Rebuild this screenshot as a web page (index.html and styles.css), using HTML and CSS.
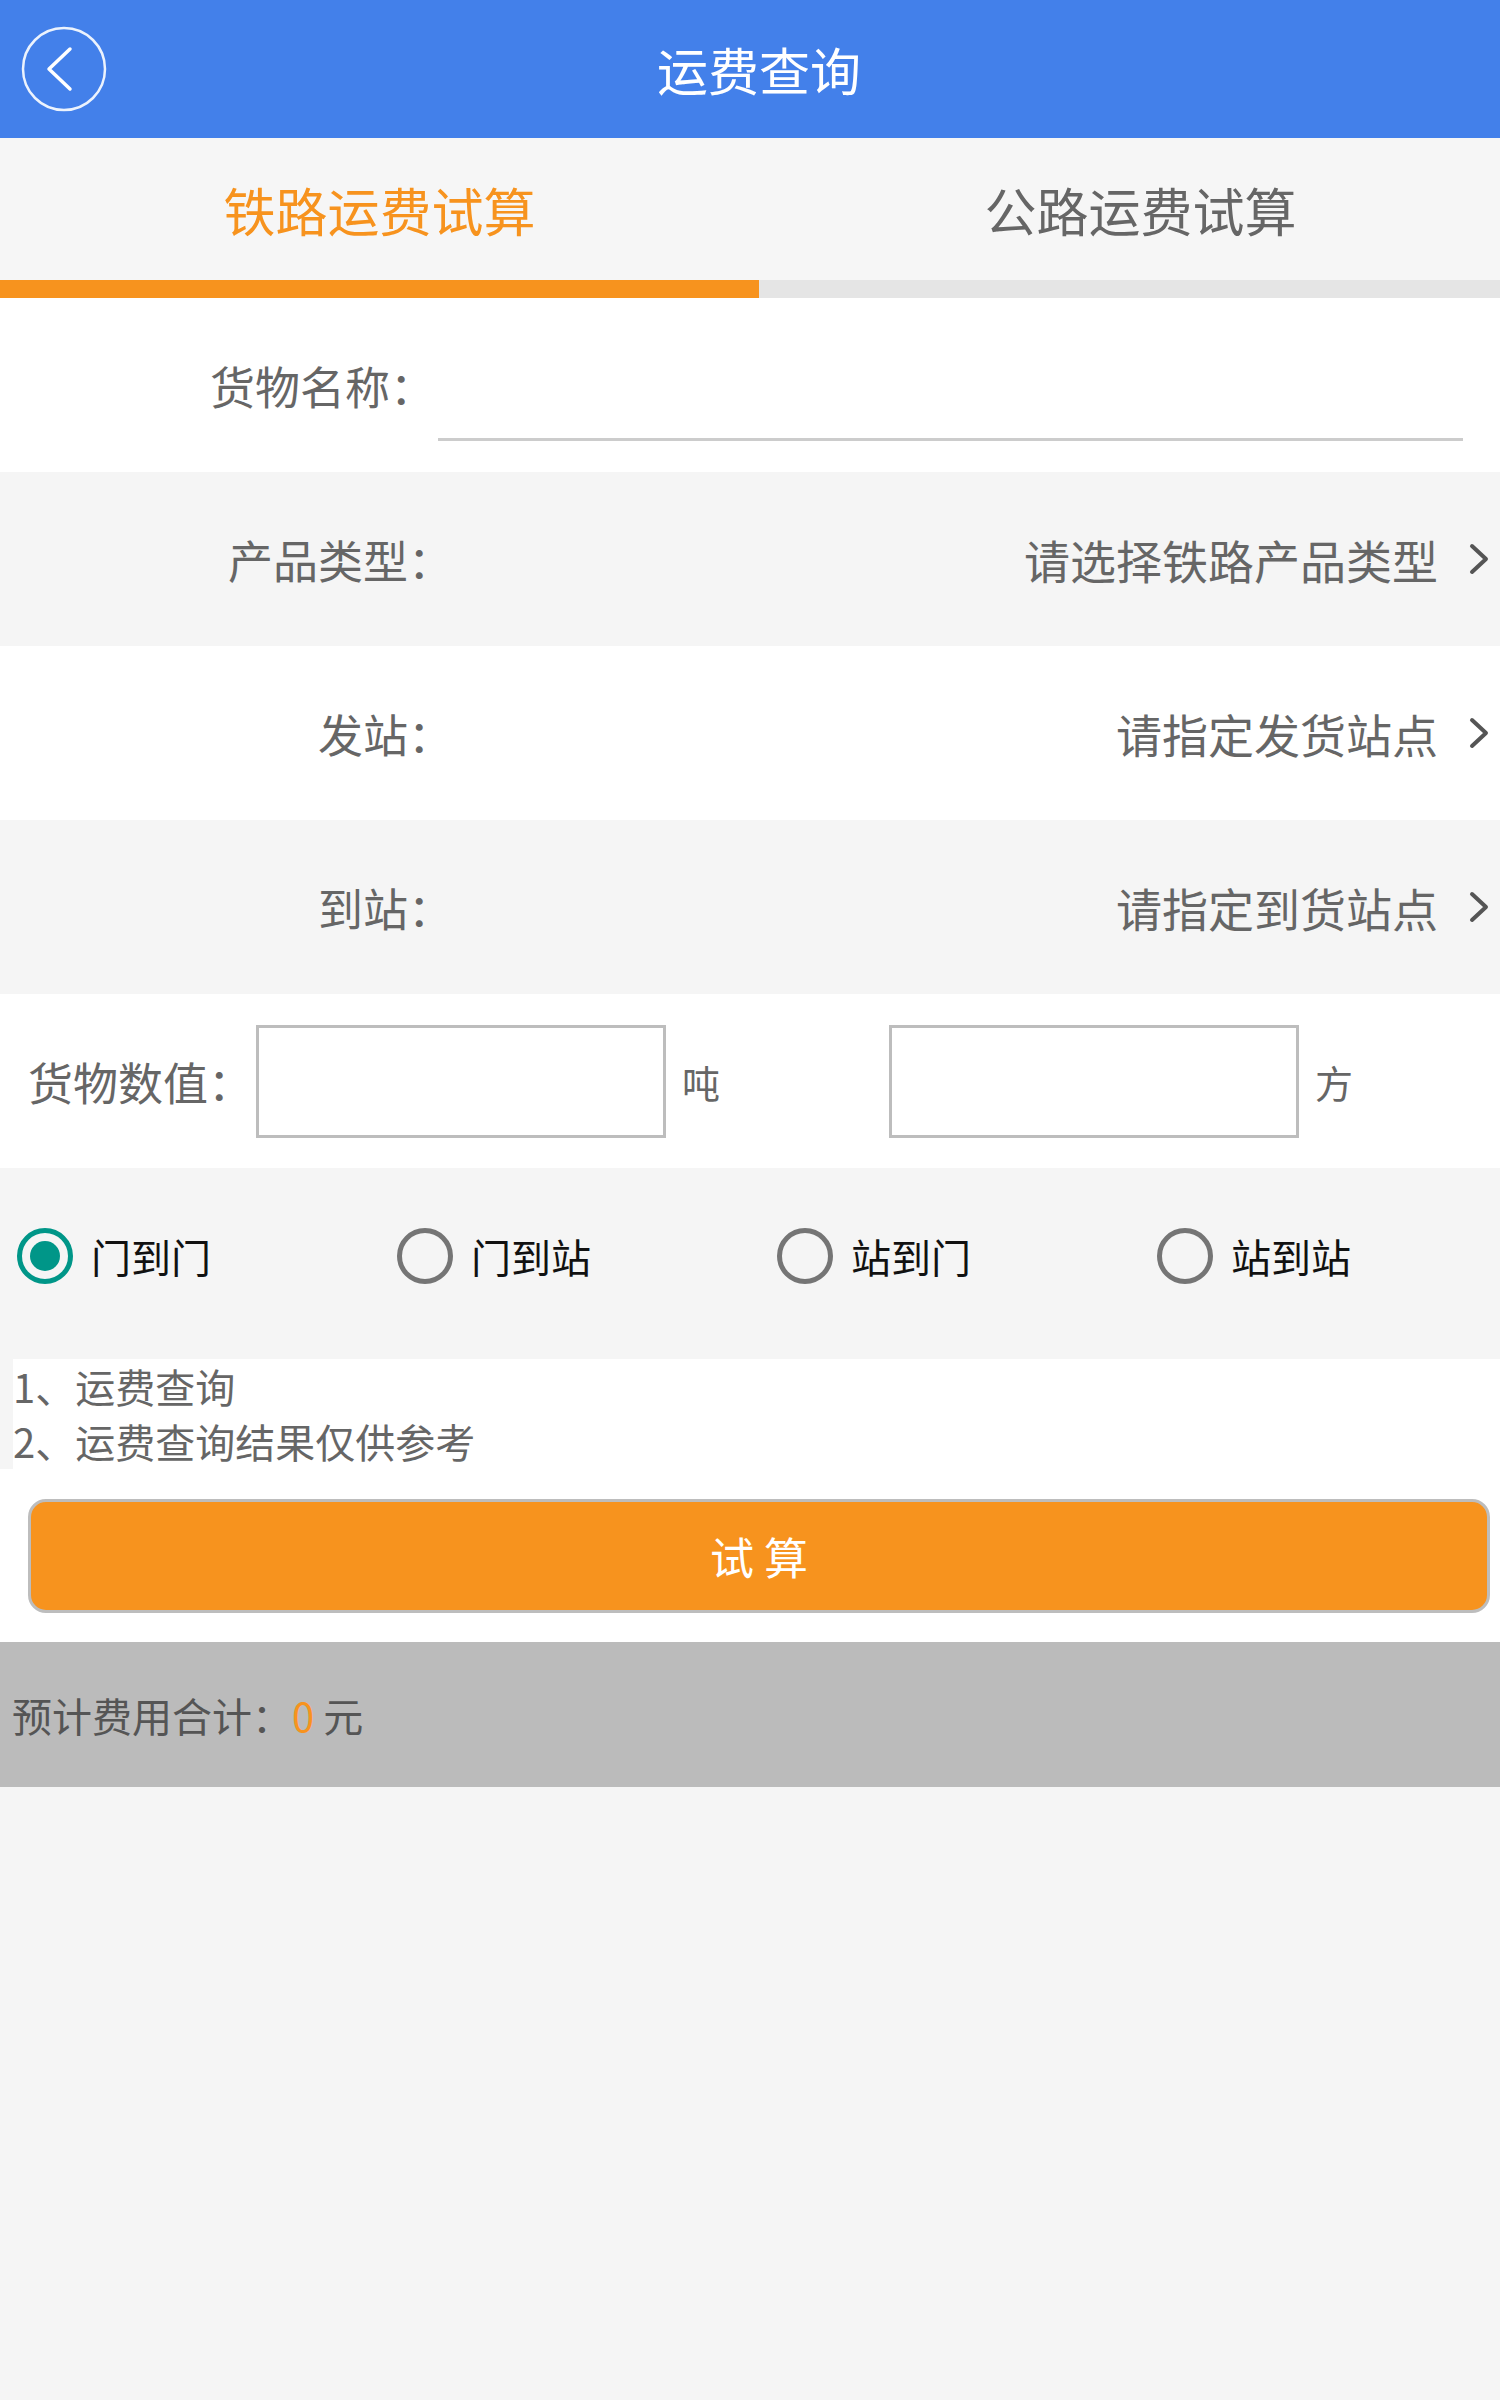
FILE: index.html
```html
<!DOCTYPE html>
<html lang="zh-CN">
<head>
    <meta charset="UTF-8">
    <meta name="viewport" content="width=device-width, initial-scale=1.0">
    <title>运费查询</title>
    <link rel="stylesheet" href="styles.css">
</head>
<body>
    <div class="header">
        <a class="back-btn" href="#">
            <svg width="90" height="90" viewBox="0 0 90 90">
                <circle cx="45" cy="45" r="41" fill="none" stroke="#ffffff" stroke-width="2.5" opacity="0.9"/>
                <path d="M51 25 L30 45 L51 65" fill="none" stroke="#ffffff" stroke-width="3.5" stroke-linecap="round" stroke-linejoin="round"/>
            </svg>
        </a>
        <h1 class="title">运费查询</h1>
    </div>

    <div class="tabs">
        <div class="tab tab-active">铁路运费试算</div>
        <div class="tab tab-right">公路运费试算</div>
    </div>
    <div class="tab-bar">
        <div class="tab-bar-active"></div>
    </div>

    <div class="row row-white">
        <div class="label label-name">货物名称：</div>
        <input class="name-input" type="text">
    </div>

    <div class="row row-grey">
        <div class="label">产品类型：</div>
        <div class="value">请选择铁路产品类型</div>
        <svg class="chevron" width="24" height="40" viewBox="0 0 24 40">
            <path d="M5 7 L19 20 L5 33" fill="none" stroke="#555555" stroke-width="4" stroke-linecap="round" stroke-linejoin="round"/>
        </svg>
    </div>

    <div class="row row-white">
        <div class="label">发站：</div>
        <div class="value">请指定发货站点</div>
        <svg class="chevron" width="24" height="40" viewBox="0 0 24 40">
            <path d="M5 7 L19 20 L5 33" fill="none" stroke="#555555" stroke-width="4" stroke-linecap="round" stroke-linejoin="round"/>
        </svg>
    </div>

    <div class="row row-grey">
        <div class="label">到站：</div>
        <div class="value">请指定到货站点</div>
        <svg class="chevron" width="24" height="40" viewBox="0 0 24 40">
            <path d="M5 7 L19 20 L5 33" fill="none" stroke="#555555" stroke-width="4" stroke-linecap="round" stroke-linejoin="round"/>
        </svg>
    </div>

    <div class="row row-white row-amount">
        <div class="amount-label">货物数值：</div>
        <input class="amount-input" type="text">
        <div class="unit">吨</div>
        <input class="amount-input" type="text">
        <div class="unit unit-last">方</div>
    </div>

    <div class="radio-row">
        <label class="radio-item">
            <span class="radio radio-checked"></span>
            <span class="radio-text">门到门</span>
        </label>
        <label class="radio-item">
            <span class="radio"></span>
            <span class="radio-text">门到站</span>
        </label>
        <label class="radio-item">
            <span class="radio"></span>
            <span class="radio-text">站到门</span>
        </label>
        <label class="radio-item">
            <span class="radio"></span>
            <span class="radio-text">站到站</span>
        </label>
    </div>

    <div class="notes">
        <div>1、运费查询</div>
        <div>2、运费查询结果仅供参考</div>
    </div>

    <div class="btn-area">
        <button class="calc-btn">试 算</button>
    </div>

    <div class="result">
        <span>预计费用合计：<span class="result-num">0</span> 元</span>
    </div>
</body>
</html>
```

FILE: styles.css
```css
body {
    margin: 0;
    background: #f5f5f5;
    font-family: "Noto Sans CJK SC", "Noto Sans", sans-serif;
    overflow-x: hidden;
}

.header {
    height: 138px;
    background: #4380ea;
    display: flex;
    align-items: center;
    position: relative;
}

.back-btn {
    position: absolute;
    left: 19px;
    top: 24px;
    width: 90px;
    height: 90px;
}

.title {
    flex: 1;
    margin: 0;
    padding-left: 18px;
    text-align: center;
    color: #ffffff;
    font-size: 51px;
    font-weight: normal;
}

.tabs {
    display: grid;
    grid-template-columns: 759px 1fr;
    height: 142px;
    background: #f6f6f6;
}

.tab {
    display: flex;
    align-items: center;
    justify-content: center;
    font-size: 52px;
    color: #666666;
}

.tab-active {
    color: #f7931e;
}

.tab-right {
    padding-left: 22px;
}

.tab-bar {
    height: 18px;
    background: #e5e5e5;
}

.tab-bar-active {
    width: 759px;
    height: 100%;
    background: #f7931e;
}

.row {
    height: 174px;
    display: flex;
    align-items: center;
    font-size: 45px;
    color: #666666;
}

.row-white {
    background: #ffffff;
}

.row-grey {
    background: #f5f5f5;
}

.label {
    width: 453px;
    flex-shrink: 0;
    text-align: right;
}

.label-name {
    width: 435px;
}

.name-input {
    align-self: flex-end;
    flex: 1;
    height: 100px;
    margin: 0 37px 31px 3px;
    border: none;
    border-bottom: 3px solid #cccccc;
    background: transparent;
    outline: none;
    font-size: 44px;
}

.value {
    flex: 1;
    text-align: right;
    font-size: 46px;
}

.chevron {
    margin: 0 9px 0 29px;
}

.row-amount {
    padding-left: 28px;
}

.amount-label {
    width: 228px;
    flex-shrink: 0;
}

.amount-input {
    flex-shrink: 0;
    width: 410px;
    height: 113px;
    box-sizing: border-box;
    border: 3px solid #bdbdbd;
    background: #ffffff;
    outline: none;
    font-size: 40px;
}

.unit {
    flex-shrink: 0;
    width: 223px;
    padding-left: 16px;
    box-sizing: border-box;
    font-size: 38px;
    color: #666666;
}

.unit-last {
    flex: 1;
    width: auto;
}

.radio-row {
    height: 191px;
    box-sizing: border-box;
    padding: 0 0 16px 17px;
    display: grid;
    grid-template-columns: 380px 380px 380px 1fr;
    align-items: center;
}

.radio-item {
    display: flex;
    align-items: center;
}

.radio {
    width: 56px;
    height: 56px;
    box-sizing: border-box;
    border: 5px solid #757575;
    border-radius: 50%;
    display: flex;
    align-items: center;
    justify-content: center;
}

.radio-checked {
    border-color: #009688;
}

.radio-checked::after {
    content: "";
    width: 30px;
    height: 30px;
    border-radius: 50%;
    background: #009688;
}

.radio-text {
    margin-left: 18px;
    font-size: 40px;
    color: #111111;
}

.notes {
    margin-left: 13px;
    height: 110px;
    background: #ffffff;
    font-size: 40px;
    line-height: 55px;
    color: #666666;
}

.btn-area {
    background: #ffffff;
    padding: 30px 10px 29px 28px;
}

.calc-btn {
    display: block;
    width: 100%;
    height: 114px;
    border: 3px solid #bdbdbd;
    border-radius: 18px;
    background: #f7931e;
    color: #ffffff;
    font-family: "Noto Sans CJK SC", "Noto Sans", sans-serif;
    font-size: 44px;
}

.result {
    height: 145px;
    background: #bbbbbb;
    display: flex;
    align-items: center;
    padding-left: 12px;
    font-size: 40px;
    color: #555555;
}

.result-num {
    color: #f7931e;
}
```
